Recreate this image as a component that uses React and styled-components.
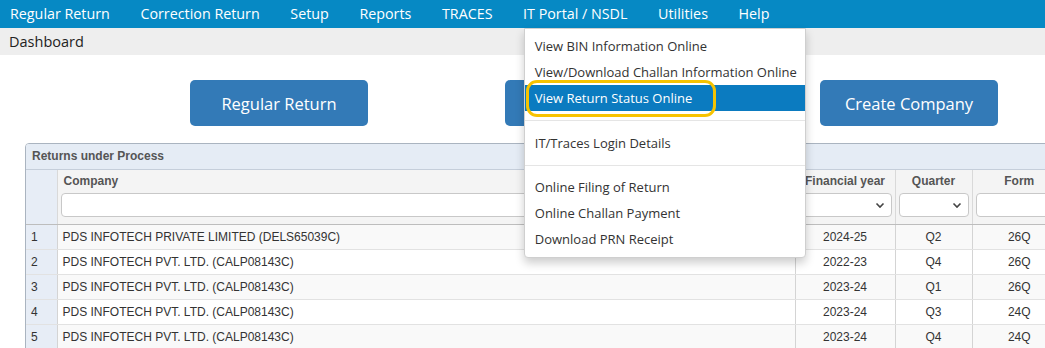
import React from 'react';
import styled, { createGlobalStyle } from 'styled-components';

const GlobalStyle = createGlobalStyle`
  html, body {
    margin: 0;
    padding: 0;
    background: #ffffff;
    overflow: hidden;
  }
  body {
    font-family: "Open Sans", "Noto Sans", sans-serif;
  }
`;

const Page = styled.div`
  width: 1045px;
  height: 348px;
  position: relative;
`;

const TopNav = styled.nav`
  display: flex;
  height: 28px;
  background: #0689c4;
`;

const NavItem = styled.div`
  position: relative;
  padding: 0 15.3px;
  color: #ffffff;
  font-size: 14.3px;
  line-height: 28px;
  white-space: nowrap;
  &:first-child {
    padding-left: 10px;
  }
`;

const Crumb = styled.div`
  height: 27px;
  background: #eeeeee;
  color: #222;
  font-size: 14.5px;
  line-height: 27px;
  padding-left: 9px;
`;

const ButtonRow = styled.div`
  display: flex;
  gap: 137px;
  padding: 25px 0 0 190px;
`;

const BigButton = styled.button`
  width: 178px;
  height: 46px;
  border: none;
  border-radius: 5px;
  background: #337ab7;
  color: #ffffff;
  font-family: "Open Sans", "Noto Sans", sans-serif;
  font-size: 16.5px;
  cursor: pointer;
`;

const Panel = styled.div`
  margin: 17px 0 0 25px;
  width: 1040px;
  border: 1px solid #aab4c0;
  border-radius: 4px 0 0 0;
  overflow: hidden;
  font-family: "Liberation Sans", Arial, sans-serif;
  font-size: 12px;
`;

const Caption = styled.div`
  height: 25px;
  line-height: 25px;
  padding-left: 6px;
  background: #e5ecf5;
  color: #555;
  font-weight: bold;
  border-bottom: 1px solid #c5ceda;
`;

const Table = styled.table`
  border-collapse: collapse;
  table-layout: fixed;
  width: 1040px;
`;

const HeadCell = styled.th`
  background: ${(p) => (p.$num ? '#e7edf6' : '#f4f4f4')};
  color: #555;
  font-weight: bold;
  text-align: ${(p) => p.$align || 'center'};
  vertical-align: top;
  padding: 3px 3px 6px;
  height: 45px;
  border-bottom: 1px solid #bdbdbd;
  border-left: ${(p) => (p.$num ? 'none' : '1px solid #d9d9d9')};
`;

const HeadLabel = styled.div`
  height: 18px;
  line-height: 16px;
  padding-left: ${(p) => p.$indent || 0}px;
`;

const FilterBox = styled.div`
  display: flex;
  align-items: center;
  justify-content: flex-end;
  height: 22px;
  margin-top: 2px;
  background: #fff;
  border: 1px solid #c8c8c8;
  border-radius: 4px;
  padding-right: 6px;
`;

const Row = styled.tr`
  background: ${(p) => (p.$odd ? '#f9f9f9' : '#ffffff')};
`;

const Cell = styled.td`
  height: 24px;
  padding: 0 5px;
  color: #333;
  text-align: ${(p) => p.$align || 'center'};
  border-bottom: 1px solid #e2e2e2;
  border-left: ${(p) => (p.$num ? 'none' : '1px solid #d4d4d4')};
  background: ${(p) => (p.$num ? '#e7edf6' : 'transparent')};
  white-space: nowrap;
`;

const Menu = styled.div`
  position: absolute;
  top: 28px;
  left: 16px;
  width: 280px;
  padding: 4px 0 5px;
  background: #ffffff;
  border: 1px solid #cfcfcf;
  border-radius: 0 0 4px 4px;
  box-shadow: 0 5px 10px rgba(0, 0, 0, 0.2);
  z-index: 10;
`;

const MenuItem = styled.div`
  position: relative;
  height: 26px;
  line-height: 26px;
  padding-left: 10px;
  font-size: 13px;
  color: ${(p) => (p.$active ? '#ffffff' : '#333333')};
  background: ${(p) => (p.$active ? '#0b7bc0' : 'transparent')};
`;

const Divider = styled.div`
  height: 1px;
  margin: 9px 0 8.5px;
  background: #e5e5e5;
`;

const Ring = styled.div`
  position: absolute;
  left: 1px;
  top: -5px;
  width: 184px;
  height: 31px;
  border: 3px solid #f7c300;
  border-radius: 11px;
  pointer-events: none;
`;

const Chevron = () => (
  <svg width="10" height="7" viewBox="0 0 10 7">
    <path d="M1.5 1.5 L5 5 L8.5 1.5" fill="none" stroke="#444" strokeWidth="1.6" />
  </svg>
);

const navItems = ['Regular Return', 'Correction Return', 'Setup', 'Reports', 'TRACES', 'IT Portal / NSDL', 'Utilities', 'Help'];

const rows = [
  ['PDS INFOTECH PRIVATE LIMITED (DELS65039C)', '2024-25', 'Q2', '26Q'],
  ['PDS INFOTECH PVT. LTD. (CALP08143C)', '2022-23', 'Q4', '26Q'],
  ['PDS INFOTECH PVT. LTD. (CALP08143C)', '2023-24', 'Q1', '26Q'],
  ['PDS INFOTECH PVT. LTD. (CALP08143C)', '2023-24', 'Q3', '24Q'],
  ['PDS INFOTECH PVT. LTD. (CALP08143C)', '2023-24', 'Q4', '24Q'],
];

const PortalMenu = () => (
  <Menu>
    <MenuItem>View BIN Information Online</MenuItem>
    <MenuItem>View/Download Challan Information Online</MenuItem>
    <MenuItem $active>
      View Return Status Online
      <Ring />
    </MenuItem>
    <Divider />
    <MenuItem>IT/Traces Login Details</MenuItem>
    <Divider />
    <MenuItem>Online Filing of Return</MenuItem>
    <MenuItem>Online Challan Payment</MenuItem>
    <MenuItem>Download PRN Receipt</MenuItem>
  </Menu>
);

const App = () => {
  return (
    <Page>
      <GlobalStyle />
      <TopNav>
        {navItems.map((n) => (
          <NavItem key={n}>
            {n}
            {n === 'IT Portal / NSDL' && <PortalMenu />}
          </NavItem>
        ))}
      </TopNav>
      <Crumb>Dashboard</Crumb>
      <ButtonRow>
        <BigButton>Regular Return</BigButton>
        <BigButton>Correction Return</BigButton>
        <BigButton>Create Company</BigButton>
      </ButtonRow>
      <Panel>
        <Caption>Returns under Process</Caption>
        <Table>
          <colgroup>
            <col style={{ width: 31 }} />
            <col style={{ width: 738 }} />
            <col style={{ width: 100 }} />
            <col style={{ width: 77 }} />
            <col />
          </colgroup>
          <thead>
            <tr>
              <HeadCell $num />
              <HeadCell $align="left">
                <HeadLabel $indent={3}>Company</HeadLabel>
                <FilterBox />
              </HeadCell>
              <HeadCell>
                <HeadLabel>Financial year</HeadLabel>
                <FilterBox><Chevron /></FilterBox>
              </HeadCell>
              <HeadCell>
                <HeadLabel>Quarter</HeadLabel>
                <FilterBox><Chevron /></FilterBox>
              </HeadCell>
              <HeadCell>
                <HeadLabel>Form</HeadLabel>
                <FilterBox><Chevron /></FilterBox>
              </HeadCell>
            </tr>
          </thead>
          <tbody>
            {rows.map((r, i) => (
              <Row key={i} $odd={i % 2 === 0}>
                <Cell $num $align="left">{i + 1}</Cell>
                <Cell $align="left">{r[0]}</Cell>
                <Cell>{r[1]}</Cell>
                <Cell>{r[2]}</Cell>
                <Cell>{r[3]}</Cell>
              </Row>
            ))}
          </tbody>
        </Table>
      </Panel>
    </Page>
  );
};

export default App;
